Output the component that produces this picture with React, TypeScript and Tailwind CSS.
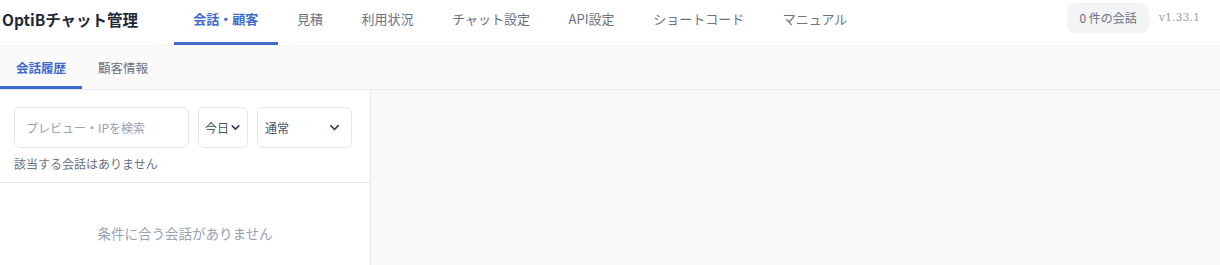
import React from 'react';
import { ChevronDown } from 'lucide-react';

const navItems = ['会話・顧客', '見積', '利用状況', 'チャット設定', 'API設定', 'ショートコード', 'マニュアル'];
const subTabs = ['会話履歴', '顧客情報'];

const App = () => {
  return (
    <div
      className="w-[1220px] h-[265px] bg-white flex flex-col overflow-hidden text-gray-700"
      style={{ fontFamily: '"Noto Sans CJK JP", "Noto Sans", sans-serif' }}
    >
      {/* header */}
      <header className="h-[46px] flex items-start border-b border-gray-100 bg-white">
        <div className="pl-[2px] pt-[7px] w-[174px] text-[15.5px] font-bold text-gray-800 leading-6">OptiBチャット管理</div>
        <nav className="flex">
          {navItems.map((item, i) => (
            <div
              key={item}
              className={
                i === 0
                  ? 'h-[45px] px-[19.3px] pt-[9px] text-[13px] leading-5 font-bold text-[#3d6bd0] border-b-[3px] border-[#3d6bd0]'
                  : 'h-[45px] px-[19.3px] pt-[9px] text-[13px] leading-5 text-gray-500 border-b-[3px] border-transparent'
              }
            >
              {item}
            </div>
          ))}
        </nav>
        <div className="ml-auto flex items-center gap-[10px] pt-[3px] pr-[20px]">
          <span className="h-[30px] px-[12px] flex items-center rounded-lg bg-gray-100 text-[12px] text-gray-500">0 件の会話</span>
          <span className="text-[11px] text-gray-400" style={{ fontFamily: '"DejaVu Serif", serif' }}>v1.33.1</span>
        </div>
      </header>

      {/* sub tabs */}
      <div className="h-[44px] flex border-b border-gray-200 bg-[#fafafa]">
        {subTabs.map((t, i) => (
          <div
            key={t}
            className={
              i === 0
                ? 'h-[43px] px-4 pt-[12px] text-[12.5px] leading-5 font-bold text-[#3d6bd0] border-b-[3px] border-[#3d6bd0]'
                : 'h-[43px] px-4 pt-[12px] text-[12.5px] leading-5 text-gray-500 border-b-[3px] border-transparent'
            }
          >
            {t}
          </div>
        ))}
      </div>

      {/* body */}
      <div className="flex flex-1 min-h-0">
        <aside className="w-[371px] border-r border-gray-200 bg-white flex flex-col">
          <div className="pl-[14px] pt-[17px] pb-[10px] border-b border-gray-200">
            <div className="flex gap-[9px]">
              <div className="w-[175px] h-[41px] border border-gray-200 rounded-md flex items-center px-[11px] text-[12px] text-gray-400">
                プレビュー・IPを検索
              </div>
              <div className="w-[50px] h-[41px] border border-gray-200 rounded-md flex items-center pl-[6px] text-[12px] text-gray-600">
                今日
                <ChevronDown size={13} strokeWidth={3} className="text-gray-700" />
              </div>
              <div className="w-[95px] h-[41px] border border-gray-200 rounded-md flex items-center justify-between pl-[7px] pr-[9px] text-[12px] text-gray-600">
                通常
                <ChevronDown size={15} strokeWidth={2.5} className="text-gray-700" />
              </div>
            </div>
            <div className="mt-[8px] text-[12px] leading-4 text-gray-500">該当する会話はありません</div>
          </div>
          <div className="flex-1 flex justify-center pt-[40px] text-[13.5px] leading-5 text-gray-400">条件に合う会話がありません</div>
        </aside>
        <main className="flex-1 bg-[#f8f9fb]" />
      </div>
    </div>
  );
};

export default App;
